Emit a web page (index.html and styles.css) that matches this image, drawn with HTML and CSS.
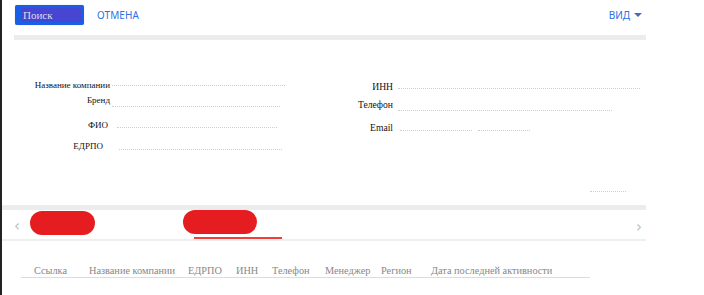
FILE: index.html
```html
<!DOCTYPE html>
<html lang="ru">
<head>
<meta charset="utf-8">
<link rel="stylesheet" href="styles.css">
</head>
<body>
<div class="page">
  <div class="toolbar">
    <button class="btn-search"><span class="btn-inner">Поиск</span></button>
    <span class="btn-cancel">ОТМЕНА</span>
    <span class="spacer"></span>
    <span class="view">ВИД <span class="caret"></span></span>
  </div>
  <div class="bar bar-top"></div>
  <div class="form">
    <div class="col col-left">
      <div class="row r1"><span class="label">Название компании</span><span class="line l1"></span></div>
      <div class="row r2"><span class="label">Бренд</span><span class="line l2"></span></div>
      <div class="row r3"><span class="label lab3">ФИО</span><span class="line l3"></span></div>
      <div class="row r4"><span class="label lab4">ЕДРПО</span><span class="line l4"></span></div>
    </div>
    <div class="col col-right">
      <div class="row q1"><span class="label rlabel">ИНН</span><span class="line m1"></span></div>
      <div class="row q2"><span class="label rlabel">Телефон</span><span class="line m2"></span></div>
      <div class="row q3"><span class="label rlabel">Email</span><span class="line m3a"></span><span class="line m3b"></span></div>
    </div>
  </div>
  <div class="form-foot"><span class="line foot-line"></span></div>
  <div class="bar bar-mid"></div>
  <div class="tabs">
    <span class="arrow">&#8249;</span>
    <span class="pill pill1"></span>
    <span class="tab-active"><span class="pill pill2"></span></span>
    <span class="spacer"></span>
    <span class="arrow arrow-r">&#8250;</span>
  </div>
  <div class="thead">
    <span class="th">Ссылка</span>
    <span class="th">Название компании</span>
    <span class="th">ЕДРПО</span>
    <span class="th">ИНН</span>
    <span class="th">Телефон</span>
    <span class="th">Менеджер</span>
    <span class="th">Регион</span>
    <span class="th">Дата последней активности</span>
  </div>
</div>
</body>
</html>
```
FILE: styles.css
```css
* { box-sizing: border-box; }
html, body { margin: 0; padding: 0; background: #fff; }
body { width: 704px; height: 295px; overflow: hidden; }
.page {
  border-left: 2px solid #222;
  height: 295px;
  width: 704px;
}
.toolbar {
  display: flex;
  align-items: flex-start;
  height: 35px;
  padding: 5px 62px 0 13px;
  font-family: "Noto Sans", "Liberation Sans", sans-serif;
}
.btn-search {
  width: 69px;
  height: 20px;
  background: #1b5ee6;
  border: none;
  border-radius: 2px;
  padding: 3px 3px 3px 6px;
  display: flex;
  margin: 0;
  box-shadow: 0 0 1px #9ab;
}
.btn-inner {
  flex: 1;
  background: #4646d2;
  color: #dde;
  font-family: "Liberation Serif", serif;
  font-size: 11px;
  line-height: 14px;
  text-align: left;
  padding-left: 2px;
}
.btn-cancel {
  margin-left: 13px;
  color: #2a72e6;
  font-size: 10px;
  line-height: 20px;
  letter-spacing: 0.1px;
}
.spacer { flex: 1; }
.view {
  color: #2a72e6;
  font-size: 10px;
  line-height: 20px;
  display: flex;
  align-items: center;
}
.caret {
  margin-left: 4px;
  width: 0; height: 0;
  border-left: 4px solid transparent;
  border-right: 4px solid transparent;
  border-top: 4px solid #4a6fb0;
}
.bar { height: 5px; background: #ebecee; }
.bar-top { margin-left: 12px; width: 632px; }
.bar-mid { width: 644px; }
.form {
  display: flex;
  height: 130px;
  padding-top: 38px;
  font-family: "Liberation Serif", serif;
  font-size: 9px;
  color: #111;
}
.col { display: flex; flex-direction: column; }
.col-left { width: 300px; }
.row { display: flex; align-items: center; height: 14px; }
.label { display: block; text-align: right; white-space: nowrap; }
.col-left .label { width: 108px; }
.lab3 { padding-right: 2px; }
.lab4 { padding-right: 7px; }
.line { display: block; height: 0; border-top: 1px dotted #cfcfcf; }
.r2 { margin-top: 1px; }
.r3 { margin-top: 11px; }
.r4 { margin-top: 7px; }
.l1 { margin-left: 2px; width: 173px; }
.l2 { margin-left: 2px; width: 168px; margin-top: 12px; }
.l3 { margin-left: 7px; width: 160px; margin-top: 4px; }
.l4 { margin-left: 9px; width: 163px; margin-top: 6px; }
.col-right { margin-left: 0; padding-top: 1px; font-size: 9.6px; }
.rlabel { width: 91px; }
.q2 { margin-top: 4px; }
.q3 { margin-top: 9px; }
.m1 { margin-left: 5px; width: 242px; margin-top: 4px; }
.m2 { margin-left: 5px; width: 214px; margin-top: 12px; }
.m3a { margin-left: 7px; width: 72px; margin-top: 6px; }
.m3b { margin-left: 6px; width: 52px; margin-top: 6px; }
.form-foot { height: 35px; display: flex; padding-left: 588px; padding-top: 21px; }
.foot-line { width: 36px; }
.tabs {
  width: 644px;
  height: 31px;
  display: flex;
  align-items: flex-start;
  border-bottom: 2px solid #eeeff0;
  padding-left: 12px;
}
.arrow {
  font-family: "DejaVu Sans", sans-serif;
  color: #bbb;
  font-size: 15px;
  line-height: 15px;
  margin-top: 9px;
}
.arrow-r { margin-right: 4px; margin-top: 10px; }
.pill {
  display: block;
  background: #e51d20;
  border-radius: 12px;
}
.pill1 { width: 65px; height: 24px; margin-left: 10px; margin-top: 1px; }
.tab-active {
  margin-left: 88px;
  width: 100px;
  height: 29px;
  display: flex;
  flex-direction: column;
  justify-content: space-between;
}
.pill2 { width: 74px; height: 24px; }
.tab-active::after {
  content: "";
  display: block;
  margin-left: 11px;
  width: 88px;
  height: 2px;
  background: #f0403a;
}
.thead {
  margin-left: 19px;
  width: 569px;
  margin-top: 23px;
  height: 14px;
  border-bottom: 1px solid #dcdcdc;
  display: grid;
  grid-template-columns: 55px 99px 48px 36px 53px 56px 50px 1fr;
  padding-left: 13px;
  font-family: "Liberation Serif", serif;
  font-size: 10.3px;
  line-height: 13px;
  color: #888;
  white-space: nowrap;
}
```
